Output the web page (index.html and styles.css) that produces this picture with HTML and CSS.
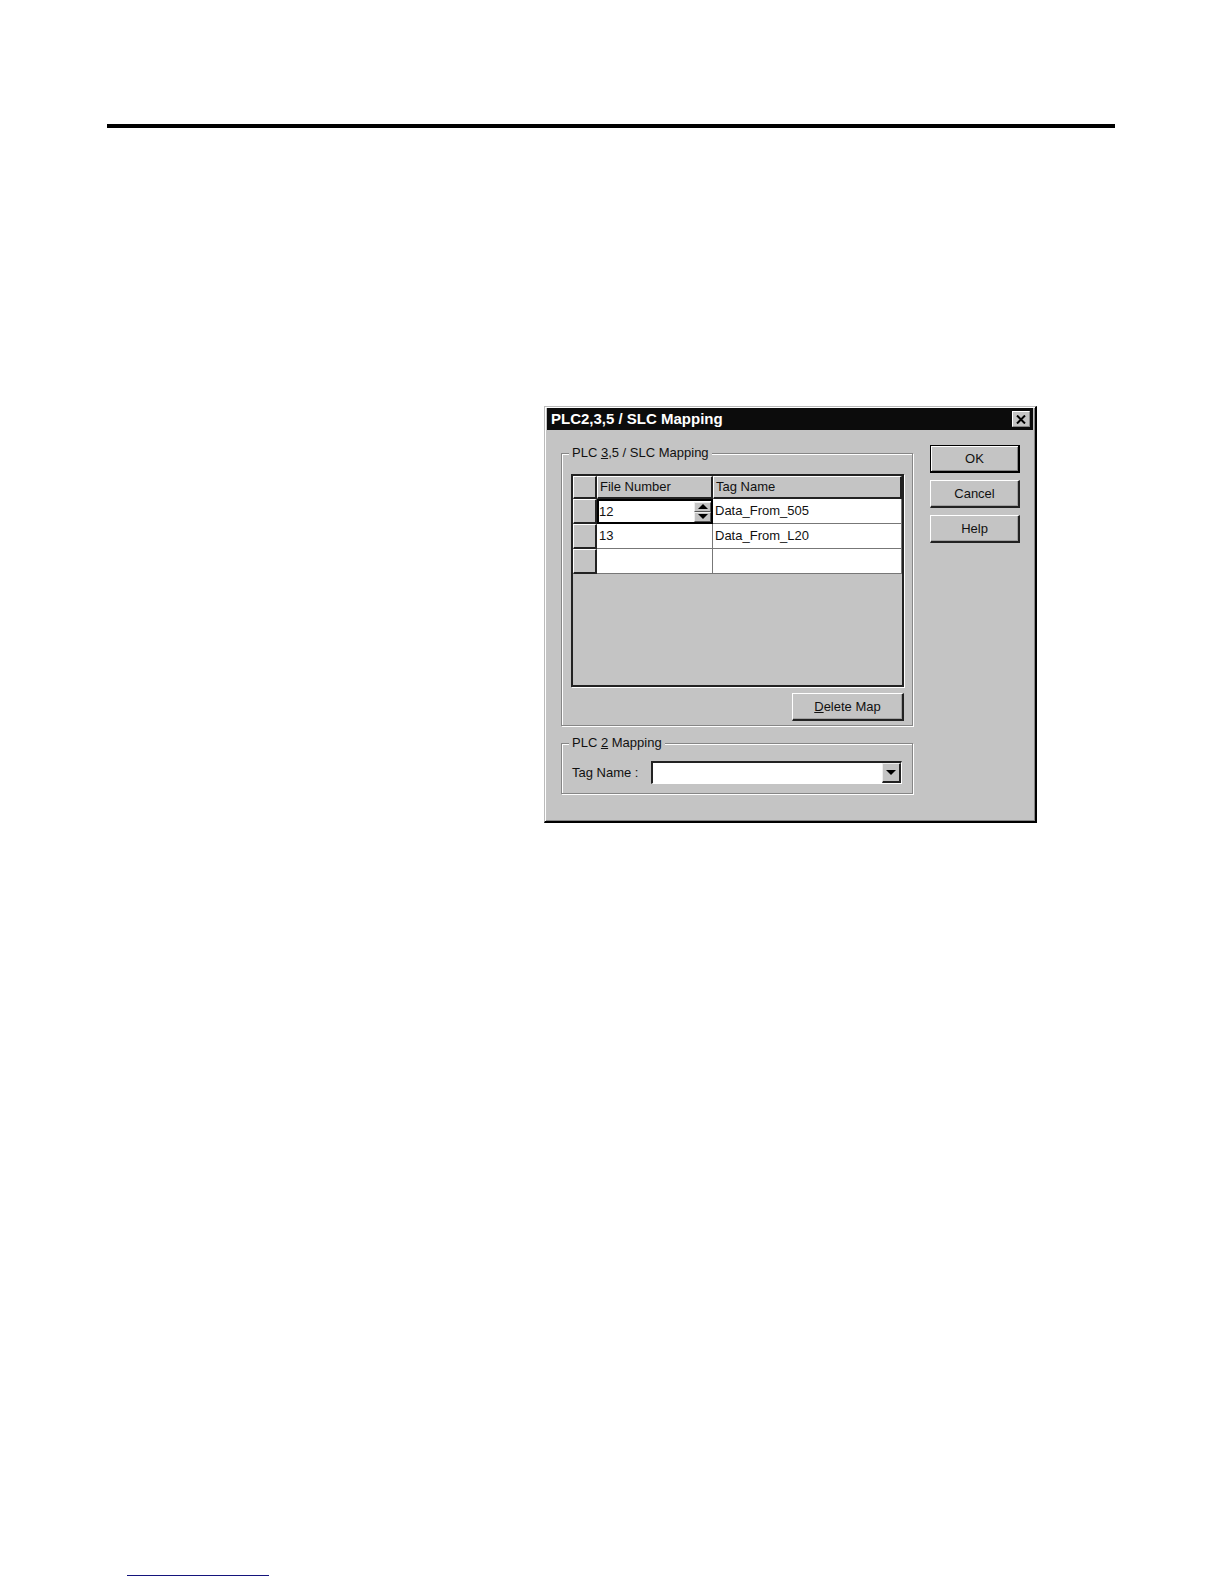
FILE: index.html
```html
<!DOCTYPE html>
<html lang="en">
<head>
    <meta charset="UTF-8" />
    <meta name="viewport" content="width=device-width, initial-scale=1" />
    <title>PLC2,3,5 / SLC Mapping</title>
    <link rel="stylesheet" href="styles.css">
</head>
<body>
<hr class="page-rule">

<main>
    <form class="dialog" role="dialog" aria-labelledby="dialogTitle">
        <header class="title-bar">
            <h1 id="dialogTitle">PLC2,3,5 / SLC Mapping</h1>
            <button type="button" class="btn-close" aria-label="Close">
                <svg width="10" height="9" viewBox="0 0 10 9"><path d="M1 0.5 L9 8.5 M9 0.5 L1 8.5" stroke="#000" stroke-width="2" /></svg>
            </button>
        </header>

        <div class="dialog-body">
            <div class="groups">
                <fieldset class="group group-map">
                    <legend>PLC <u>3</u>,5 / SLC Mapping</legend>
                    <div class="grid-box">
                        <table>
                            <thead>
                            <tr>
                                <th class="row-head"></th>
                                <th class="col-file">File Number</th>
                                <th>Tag Name</th>
                            </tr>
                            </thead>
                            <tbody>
                            <tr>
                                <th class="row-head"></th>
                                <td class="active">
                                    <div class="spinner">
                                        <input type="text" value="12" aria-label="File Number">
                                        <div class="spin-buttons">
                                            <button type="button" aria-label="Increase"><svg width="10" height="5" viewBox="0 0 10 5"><path d="M5 0 L10 5 H0 Z" /></svg></button>
                                            <button type="button" aria-label="Decrease"><svg width="10" height="5" viewBox="0 0 10 5"><path d="M0 0 H10 L5 5 Z" /></svg></button>
                                        </div>
                                    </div>
                                </td>
                                <td>Data_From_505</td>
                            </tr>
                            <tr>
                                <th class="row-head"></th>
                                <td>13</td>
                                <td>Data_From_L20</td>
                            </tr>
                            <tr>
                                <th class="row-head"></th>
                                <td></td>
                                <td></td>
                            </tr>
                            </tbody>
                        </table>
                    </div>
                    <button type="button" class="btn btn-delete"><u>D</u>elete Map</button>
                </fieldset>

                <fieldset class="group group-tag">
                    <legend>PLC <u>2</u> Mapping</legend>
                    <div class="field">
                        <label for="tagName">Tag Name :</label>
                        <div class="combo">
                            <select id="tagName">
                                <option></option>
                                <option>Data_From_505</option>
                                <option>Data_From_L20</option>
                            </select>
                            <span class="combo-arrow"><svg width="10" height="5" viewBox="0 0 10 5"><path d="M0 0 H10 L5 5 Z" /></svg></span>
                        </div>
                    </div>
                </fieldset>
            </div>

            <div class="actions">
                <button type="submit" class="btn btn-default">OK</button>
                <button type="button" class="btn">Cancel</button>
                <button type="button" class="btn">Help</button>
            </div>
        </div>
    </form>
</main>

<footer>
    <a class="footer-link" href="#" aria-label="Top of page"></a>
</footer>
</body>
</html>
```
FILE: styles.css
```css
:root {
    --face: #c4c4c4;
    --light: #fff;
    --shadow: #868686;
    --dark: #222;
    --line: #777;
    --title: #0c0c0c;
}

* {
    box-sizing: border-box;
}

body {
    display: flex;
    flex-direction: column;
    min-height: 100vh;
    margin: 0;
    padding: 124px 109px 8px 107px;
    background: #fff;
    color: #111;
    font: 13px/16px "Liberation Sans", Arial, sans-serif;
}

button, input, select {
    font: inherit;
    color: inherit;
    border-radius: 0;
}

svg {
    display: block;
}

.page-rule {
    width: 100%;
    height: 4px;
    margin: 0;
    border: 0;
    background: #000;
}

main {
    flex: 1;
    display: flex;
    justify-content: flex-end;
    align-items: flex-start;
    padding: 278px 78px 0 0;
}

/* Dialog window */
.dialog {
    width: 100%;
    max-width: 493px;
    padding: 1px;
    background: var(--face);
    border: 1px solid #bbb;
    border-right: 2px solid #000;
    border-bottom: 2px solid #000;
    box-shadow: inset 1px 1px 0 var(--light), inset -1px -1px 0 var(--shadow);
}

.title-bar {
    display: flex;
    align-items: center;
    justify-content: space-between;
    height: 22px;
    margin: 0 1px;
    padding: 0 3px 0 4px;
    background: var(--title);
    color: #fff;
}

.title-bar h1 {
    margin: 0;
    font-size: 15px;
    font-weight: bold;
}

.btn-close {
    display: flex;
    align-items: center;
    justify-content: center;
    width: 18px;
    height: 16px;
    padding: 0;
    background: var(--face);
    border: 1px solid var(--light);
    border-right-color: var(--shadow);
    border-bottom-color: var(--shadow);
}

.dialog-body {
    display: flex;
    gap: 17px;
    padding: 15px 14px 26px 15px;
}

.groups {
    flex: 1;
    display: flex;
    flex-direction: column;
    gap: 9px;
    min-width: 0;
}

.group {
    min-width: 0;
    margin: 0;
    padding: 0 8px 4px 9px;
    border: 1px solid var(--shadow);
    box-shadow: 1px 1px 0 var(--light), inset 1px 1px 0 var(--light);
}

.group legend {
    margin-left: -2px;
    padding: 0 3px;
    background: var(--face);
}

.group-map {
    padding-top: 13px;
}

.group-tag {
    padding: 10px 10px 9px 9px;
}

/* Mapping table */
.grid-box {
    min-height: 213px;
    background: var(--face);
    border: 2px solid var(--dark);
    box-shadow: 1px 1px 0 var(--light);
}

table {
    width: 100%;
    border-collapse: separate;
    border-spacing: 0;
    table-layout: fixed;
}

th, td {
    height: 25px;
    padding: 0 2px;
    text-align: left;
    font-weight: normal;
}

td {
    background: #fff;
    border-right: 1px solid var(--line);
    border-bottom: 1px solid var(--line);
}

th {
    border: 1px solid var(--light);
    border-right: 2px solid var(--dark);
    border-bottom: 2px solid var(--dark);
}

thead th {
    height: 23px;
}

.row-head {
    width: 24px;
}

.col-file {
    width: 116px;
}

td.active {
    padding: 0;
    border: 2px solid #000;
}

.spinner {
    display: flex;
    align-items: center;
}

.spinner input {
    flex: 1;
    min-width: 0;
    height: 20px;
    padding: 0;
    border: 0;
    outline: 0;
    background: #fff;
}

.spin-buttons {
    display: flex;
    flex-direction: column;
}

.spin-buttons button {
    display: flex;
    align-items: center;
    justify-content: center;
    width: 17px;
    height: 10px;
    padding: 0;
    background: var(--face);
    border: 1px solid #eee;
    border-right-color: #555;
    border-bottom-color: #555;
}

/* Buttons */
.btn {
    height: 28px;
    padding: 0 8px;
    background: var(--face);
    border: 1px solid var(--light);
    border-right: 2px solid var(--dark);
    border-bottom: 2px solid var(--dark);
    box-shadow: inset -1px -1px 0 #a0a0a0;
}

.btn-default {
    border: 1px solid #000;
    border-right-width: 2px;
    border-bottom-width: 2px;
    box-shadow: inset 1px 1px 0 var(--light), inset -1px -1px 0 var(--shadow);
}

.btn-delete {
    display: block;
    width: 112px;
    margin: 6px 0 0 auto;
}

.actions {
    display: flex;
    flex-direction: column;
    gap: 7px;
    width: 90px;
}

/* Tag name drop-down */
.field {
    display: flex;
    align-items: center;
    gap: 13px;
    padding-left: 1px;
}

.combo {
    flex: 1;
    position: relative;
    border: 2px solid var(--dark);
    border-right: 1px solid var(--light);
    border-bottom: 1px solid var(--light);
}

.combo select {
    display: block;
    width: 100%;
    height: 20px;
    padding: 0 20px 0 2px;
    appearance: none;
    background: #fff;
    border: 0;
    outline: 0;
}

.combo-arrow {
    position: absolute;
    top: 0;
    right: 0;
    bottom: 0;
    display: flex;
    align-items: center;
    justify-content: center;
    width: 19px;
    background: var(--face);
    border: 1px solid #eee;
    border-right: 2px solid var(--dark);
    border-bottom: 2px solid var(--dark);
    pointer-events: none;
}

.footer-link {
    display: block;
    width: 142px;
    height: 1px;
    margin-left: 20px;
    background: #14147c;
}
```
